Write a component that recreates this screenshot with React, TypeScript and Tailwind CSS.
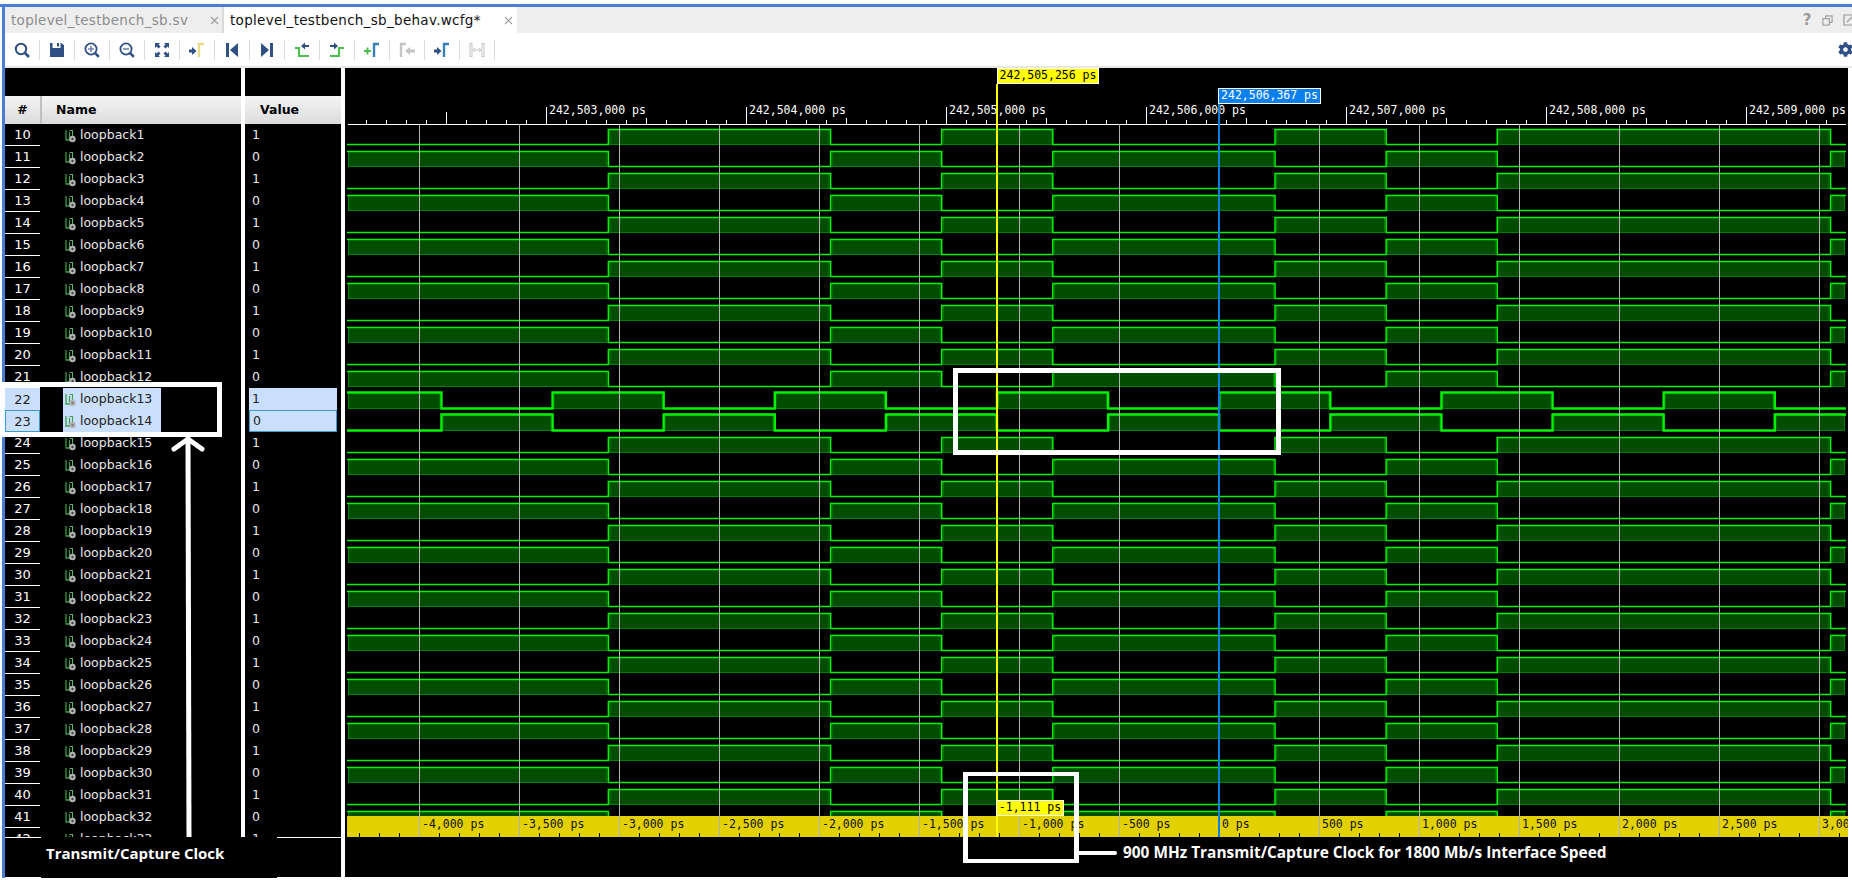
import { FaCog } from 'react-icons/fa'

const NAVY = '#2f4f85'
const GREEN = '#4cc04c'
const BLUE = '#3a7fb5'
const GRAY = '#c4c4c4'

// waveform timing, in page pixels
const STEP = 111.11
const EDGE = 941.7
const WAVE_START = 347
const WAVE_END = 1846
const ZERO = 1219
const YELLOW_X = 997
const MONO = '"DejaVu Sans Mono", monospace'

const DATA_PATTERN = [-3, -1, 0, 1, 3, 4, 5, 8].map((n) => EDGE + n * STEP)

function clockEdges() {
  const out: number[] = []
  for (let x = YELLOW_X - 6 * STEP; x < WAVE_END; x += STEP) out.push(x)
  return out.filter((x) => x > WAVE_START)
}

const signals = Array.from({ length: 33 }, (_, i) => {
  const clock = i === 12 || i === 13
  return {
    row: i + 10,
    name: `loopback${i + 1}`,
    value: i % 2 === 0 ? 1 : 0,
    selected: clock,
    focused: i === 13,
  }
})

function Wave({ index }: { index: number }) {
  const clock = index === 12 || index === 13
  const top = (clock ? 3.5 : 4.5) + index * 22
  const low = 4.5 + index * 22 + 15
  const edges = clock ? clockEdges() : DATA_PATTERN
  // row 22 starts high, row 23 starts low, data rows alternate
  const startHigh = clock ? index === 12 : index % 2 === 1
  const xs = [WAVE_START, ...edges, WAVE_END].map((x) => x - 345)
  const highs: [number, number][] = []
  let points = ''
  let high = startHigh
  for (let i = 0; i < xs.length - 1; i++) {
    const y = high ? top : low
    points += `${xs[i]},${y} ${xs[i + 1]},${y} `
    if (high) highs.push([xs[i], xs[i + 1]])
    high = !high
  }
  return (
    <g>
      {highs.map(([a, b]) => (
        <rect key={a} x={a + 1.5} y={top} width={b - a - 3} height={low - top} fill="#004d00" stroke="#008000" strokeWidth={1} />
      ))}
      <polyline points={points} fill="none" stroke="#00f500" strokeWidth={clock ? 2.4 : 1.5} />
    </g>
  )
}

function Ruler() {
  const ticks = []
  for (let x = 346; x < WAVE_END; x += 20) {
    const major = x % 200 === 146
    const mid = x % 100 === 46
    const y1 = x === 446 ? 44 : major ? 39 : mid ? 50 : 52
    if (x > 347) ticks.push(<line key={x} x1={x - 344.5} x2={x - 344.5} y1={y1} y2={56} stroke="#fff" />)
  }
  const labels = [503, 504, 505, 506, 507, 508, 509]
  return (
    <svg width={1503} height={57} className="block shrink-0">
      {ticks}
      <line x1={3} x2={1501} y1={56.5} y2={56.5} stroke="#fff" />
      {labels.map((n, i) => (
        <text key={n} x={204 + i * 200} y={46} fill="#fff" fontSize={11.5} fontFamily={MONO}>
          {`242,${n},000 ps`}
        </text>
      ))}
    </svg>
  )
}

function TimeBar() {
  const ticks = []
  for (let x = 359; x < 1848; x += 20) ticks.push(x)
  const labels = [-4000, -3500, -3000, -2500, -2000, -1500, -1000, -500, 0, 500, 1000, 1500, 2000, 2500, 3000]
  return (
    <div className="h-[21px] shrink-0 ml-[2px] bg-[#e2d000]">
      <svg width={1501} height={21} className="block">
        {ticks.map((x) => (
          <line key={x} x1={x - 346.5} x2={x - 346.5} y1={17} y2={21} stroke="#111" />
        ))}
        {labels.map((ps) => (
          <text key={ps} x={ZERO - 347 + ps / 5 + 3} y={12} fill="#111" fontSize={11.5} fontFamily={MONO}>
            {`${ps.toLocaleString('en-US')} ps`}
          </text>
        ))}
      </svg>
    </div>
  )
}

function CursorLabel({ text, className }: { text: string; className: string }) {
  return (
    <div className={`absolute h-4 flex items-center justify-center border border-white text-[11.5px] font-['DejaVu_Sans_Mono',monospace] leading-none ${className}`}>
      {text}
    </div>
  )
}

function WavePanel() {
  const grid = Array.from({ length: 15 }, (_, i) => 419 + i * 100).filter((x) => x !== ZERO)
  return (
    <div className="relative w-[1503px] shrink-0 bg-black flex flex-col overflow-hidden">
      <div className="h-[57px] shrink-0 flex flex-col justify-end">
        <Ruler />
      </div>
      <svg width={1503} height={691} className="block shrink-0">
        {signals.map((s, i) => (
          <Wave key={s.row} index={i} />
        ))}
      </svg>
      <TimeBar />
      <div className="flex-1 bg-black" />

      {/* grid and cursors lie over the waves */}
      <svg width={1503} height={769} className="absolute left-0 top-0">
        {grid.map((x) => (
          <line key={x} x1={x - 344.5} x2={x - 344.5} y1={56} y2={769} stroke="#b4b4b4" />
        ))}
        <line x1={YELLOW_X - 345} x2={YELLOW_X - 345} y1={16} y2={769} stroke="#ffff00" strokeWidth={2} />
        <line x1={ZERO - 345} x2={ZERO - 345} y1={36} y2={769} stroke="#0a80e0" strokeWidth={2} />
      </svg>
      <CursorLabel text="242,505,256 ps" className="left-[652px] top-0 w-[102px] bg-[#ffff00] text-black" />
      <CursorLabel text="242,506,367 ps" className="left-[873px] top-[20px] w-[103px] bg-[#0a80f0] text-white" />
      <CursorLabel text="-1,111 ps" className="left-[651px] top-[732px] w-[68px] bg-[#ffff00] text-black" />
    </div>
  )
}

function SignalIcon({ light }: { light?: boolean }) {
  return (
    <svg width={12} height={14} viewBox="0 0 12 14" className="shrink-0">
      <path d="M1 1v10h3.500V3" fill="none" stroke="#3c9a48" strokeWidth={1.3} />
      <path d="M4.500 1.500h3V7" fill="none" stroke={light ? '#4a9a55' : '#5fae68'} strokeWidth={1.1} />
      <circle cx={7.500} cy={10} r={3.200} fill="#b4b4b4" />
      <circle cx={7.500} cy={10} r={1.200} fill={light ? '#777' : '#444'} />
    </svg>
  )
}

function NamePanel() {
  return (
    <div className="w-[236px] shrink-0 flex flex-col bg-black">
      <div className="h-7 shrink-0" />
      <div className="h-7 shrink-0 flex bg-[#c0c0c0] gap-[2px] text-[12.5px] font-bold text-black">
        <div className="w-[35px] flex items-center justify-center bg-gradient-to-b from-[#f4f4f4] to-[#dcdcdc]">#</div>
        <div className="flex-1 flex items-center pl-[14px] bg-gradient-to-b from-[#f4f4f4] to-[#dcdcdc]">Name</div>
      </div>
      <div className="flex-1 overflow-hidden">
        {signals.map((s) => (
          <div key={s.row} className="h-[22px] flex text-[12.5px]">
            <div
              className={`w-[35px] shrink-0 flex items-center justify-center pt-px text-[13px] ${
                s.selected ? 'bg-[#c9dffc] text-[#222]' : 'text-white border-b border-white'
              } ${s.focused ? 'border border-[#3b9bd0]' : ''}`}
            >
              {s.row}
            </div>
            <div
              className={`ml-[23px] w-[98px] shrink-0 flex items-center gap-[3px] pl-[2px] pt-px whitespace-nowrap ${
                s.selected ? 'bg-[#c9dffc] text-[#222]' : 'text-[#e8e8e8]'
              }`}
            >
              <SignalIcon light={s.selected} />
              {s.name}
            </div>
          </div>
        ))}
      </div>
      <div className="h-10 shrink-0 border-t border-white" />
    </div>
  )
}

function ValuePanel() {
  return (
    <div className="w-24 shrink-0 flex flex-col bg-black">
      <div className="h-7 shrink-0" />
      <div className="h-7 shrink-0 flex items-center pl-[15px] bg-gradient-to-b from-[#f4f4f4] to-[#dcdcdc] text-[12.5px] font-bold text-black">
        Value
      </div>
      <div className="flex-1 overflow-hidden">
        {signals.map((s) => (
          <div key={s.row} className="h-[22px] px-1 flex text-[12.5px]">
            <div
              className={`flex-1 flex items-center pl-[3px] pt-px ${
                s.selected ? 'bg-[#c9dffc] text-[#222]' : 'text-[#e8e8e8]'
              } ${s.focused ? 'border border-[#3b9bd0] pl-[2px]' : ''}`}
            >
              {s.value}
            </div>
          </div>
        ))}
      </div>
      <div className="h-10 shrink-0 border-t border-white" />
    </div>
  )
}

function Marker({ color, dir = 'r', arrow = NAVY, plus }: { color: string; dir?: 'r' | 'l'; arrow?: string; plus?: boolean }) {
  return (
    <svg width={18} height={16} viewBox="0 0 18 16">
      <path d={dir === 'l' ? 'M3 15V2h5' : 'M11 15V2h5'} fill="none" stroke={color} strokeWidth={2.4} />
      {plus && <path d="M1 9h7M4.5 5.5v7" stroke={GREEN} strokeWidth={2} />}
      {!plus && dir === 'r' && <path d="M1 7.5h3V5l4.5 4L4 13v-2.5H1z" fill={arrow} />}
      {!plus && dir === 'l' && <path d="M17 7.5h-5V5L7 9l5 4v-2.500h5z" fill={arrow} />}
    </svg>
  )
}

const toolIcons = [
  <svg key="find" width={16} height={16} viewBox="0 0 16 16" fill="none" stroke={NAVY}>
    <circle cx={7} cy={7} r={5.2} strokeWidth={2} />
    <path d="M11 11l4 4" strokeWidth={2.6} />
  </svg>,
  <svg key="save" width={16} height={16} viewBox="0 0 16 16" fill={NAVY}>
    <path d="M1 1h2.5v5h8V1H12l3 2v12H1z" />
    <rect x={8} y={1} width={2} height={3.5} />
  </svg>,
  <svg key="in" width={16} height={16} viewBox="0 0 16 16" fill="none" stroke={NAVY}>
    <circle cx={7} cy={7} r={5.6} strokeWidth={1.8} />
    <path d="M11.2 11.2l3.6 3.6" strokeWidth={2.6} />
    <path d="M4 7h6M7 4v6" strokeWidth={1.6} stroke="#6f86ad" />
  </svg>,
  <svg key="out" width={16} height={16} viewBox="0 0 16 16" fill="none" stroke={NAVY}>
    <circle cx={7} cy={7} r={5.6} strokeWidth={1.8} />
    <path d="M11.2 11.2l3.6 3.6" strokeWidth={2.6} />
    <path d="M4 7h6" strokeWidth={1.6} stroke="#6f86ad" />
  </svg>,
  <svg key="fit" width={16} height={16} viewBox="0 0 16 16" fill={NAVY}>
    <path d="M1 1h5L4.500 2.600 6.500 4.600 4.600 6.500 2.600 4.500 1 6zM15 1v5l-1.600-1.500-2 2-1.900-1.900 2-2L10 1zM1 15v-5l1.600 1.500 2-2 1.900 1.900-2 2L6 15zM15 15h-5l1.500-1.600-2-2 1.900-1.900 2 2L15 10z" />
  </svg>,
  <Marker key="mark" color="#ead98a" />,
  <svg key="prev" width={14} height={16} viewBox="0 0 14 16" fill={NAVY}>
    <rect x={1} y={1} width={3} height={14} />
    <path d="M13 1v14L5 8z" />
  </svg>,
  <svg key="next" width={14} height={16} viewBox="0 0 14 16" fill={NAVY}>
    <rect x={10} y={1} width={3} height={14} />
    <path d="M1 1v14l8-7z" />
  </svg>,
  <svg key="fall" width={16} height={16} viewBox="0 0 16 16">
    <path d="M1 6h4v8h10" fill="none" stroke={GREEN} strokeWidth={2.2} />
    <path d="M15 3h-4V0.500L7 4l4 3.500V5h4z" fill={NAVY} />
  </svg>,
  <svg key="rise" width={16} height={16} viewBox="0 0 16 16">
    <path d="M1 14h9V6h5" fill="none" stroke={GREEN} strokeWidth={2.2} />
    <path d="M1 3h4V0.500L9 4 5 7.500V5H1z" fill={NAVY} />
  </svg>,
  <Marker key="add" color={BLUE} plus />,
  <Marker key="back" color={GRAY} dir="l" arrow={GRAY} />,
  <Marker key="fwd" color={BLUE} />,
  <svg key="span" width={16} height={16} viewBox="0 0 16 16" fill="none" stroke={GRAY}>
    <rect x={1} y={1.5} width={2} height={13} />
    <rect x={13} y={1.5} width={2} height={13} />
    <path d="M4 8h8M6 6L4 8l2 2M10 6l2 2-2 2" />
  </svg>,
]

function Toolbar() {
  return (
    <div className="h-[33px] shrink-0 flex items-center bg-white relative">
      {toolIcons.map((icon, i) => (
        <div key={i} className="w-[35px] h-5 shrink-0 flex items-center justify-center border-r border-[#dcdcdc]">
          {icon}
        </div>
      ))}
      <FaCog className="absolute left-[1833px] top-[9px] text-[#2f4f85]" size={15} />
    </div>
  )
}

function CloseX() {
  return (
    <svg width={9} height={9} viewBox="0 0 9 9" stroke="#a0a0a0" strokeWidth={1.2} className="shrink-0">
      <path d="M1 1l7 7M8 1l-7 7" />
    </svg>
  )
}

function TabBar() {
  return (
    <div className="h-[26px] shrink-0 flex bg-[#eeeeee] text-[13.5px] relative">
      <div className="w-[217px] flex items-center pl-[6px] text-[#8c8c8c] shrink-0">
        <span className="w-[199px] whitespace-nowrap tracking-[0.3px]">toplevel_testbench_sb.sv</span>
        <CloseX />
      </div>
      <div className="w-[2px] bg-[#dadada] shrink-0" />
      <div className="w-[293px] flex items-center pl-[6px] bg-white text-[#111] shrink-0">
        <span className="w-[274px] whitespace-nowrap tracking-[0.3px]">toplevel_testbench_sb_behav.wcfg*</span>
        <CloseX />
      </div>
      <div className="absolute right-0 top-0 h-full flex items-center text-[#9a9a9a]">
        <span className="font-bold text-[15px] w-[20px] text-center mr-[5px]">?</span>
        <svg width={11} height={11} viewBox="0 0 12 12" fill="none" stroke="#9a9a9a" strokeWidth={1.2} className="mr-[10px]">
          <rect x={4} y={1} width={7} height={7} />
          <rect x={1} y={4} width={7} height={7} fill="#eee" />
        </svg>
        <svg width={9} height={12} viewBox="0 0 9 12" fill="none" stroke="#9a9a9a" strokeWidth={1.2}>
          <path d="M9 1H1v10h8M4 8l5-5" />
        </svg>
      </div>
    </div>
  )
}

function Annotations() {
  return (
    <>
      <div className="absolute left-0 top-[382px] w-[222px] h-[55px] border-[5px] border-white" />
      <div className="absolute left-[953px] top-[368px] w-[328px] h-[87px] border-[5px] border-white" />
      <div className="absolute left-[963px] top-[772px] w-[116px] h-[91px] border-x-[5px] border-y-[4px] border-white" />

      <svg width={40} height={410} className="absolute left-[168px] top-[434px]">
        <path d="M20 4L21 406" stroke="#fff" strokeWidth={5} strokeLinecap="round" />
        <path d="M6 15L20 5L34 15" fill="none" stroke="#fff" strokeWidth={5} strokeLinecap="round" />
      </svg>
      <div className="absolute left-[41px] top-[837px] w-[236px] h-[41px] bg-black pl-[5px] pt-[5px]">
        <span className="block text-white font-bold text-[15px] leading-[22px] font-['Open_Sans',sans-serif] whitespace-nowrap">Transmit/Capture Clock</span>
      </div>

      <div className="absolute left-[1079px] top-[851px] w-[38px] h-1 bg-white rounded-r-full" />
      <span className="absolute left-[1123px] top-[842px] text-white font-bold text-[15.4px] leading-[22px] font-['Open_Sans',sans-serif] whitespace-nowrap">
        900 MHz Transmit/Capture Clock for 1800 Mb/s Interface Speed
      </span>
    </>
  )
}

export default function App() {
  return (
    <div className="relative w-[1852px] h-[880px] overflow-hidden bg-white pt-1 font-['DejaVu_Sans',sans-serif]">
      <div className="h-[3px] bg-[#4a7fcf]" />
      <div className="ml-[2px] border-l-[3px] border-[#4a7fcf] h-[871px] flex flex-col">
        <TabBar />
        <Toolbar />
        <div className="h-[2px] shrink-0 bg-[#e8e8e8]" />
        <div className="h-[809px] flex gap-1">
          <NamePanel />
          <ValuePanel />
          <WavePanel />
        </div>
      </div>
      <Annotations />
    </div>
  )
}
